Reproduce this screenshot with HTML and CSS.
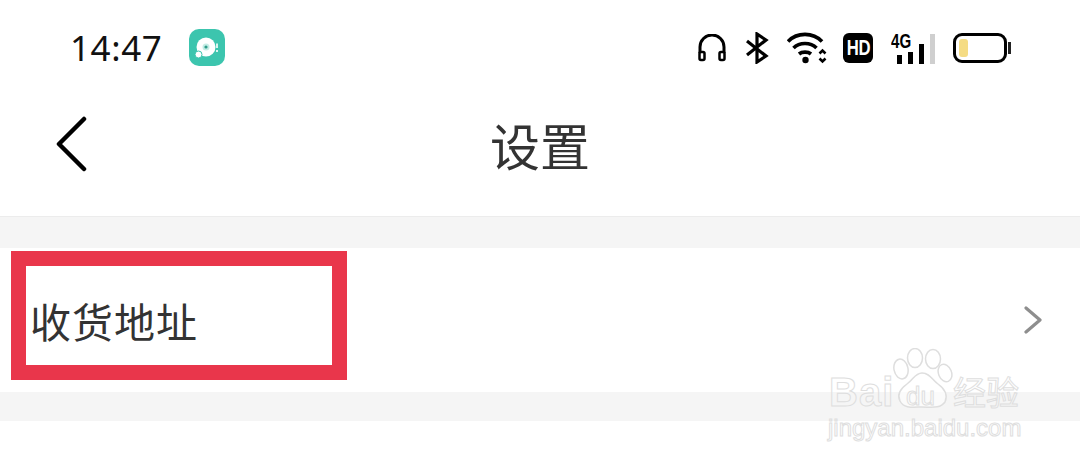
FILE: index.html
```html
<!DOCTYPE html>
<html>
<head>
    <title>设置</title>
    <meta name="viewport" content="width=device-width, initial-scale=1.0">
    <link rel="stylesheet" href="styles.css">
</head>
<body>
    <div class="status-bar">
        <div class="status-left">
            <span class="time">14:47</span>
            <svg class="app-icon" width="36" height="37" viewBox="0 0 36 37">
                <rect width="36" height="37" rx="10" fill="#3cc5ae"/>
                <circle cx="17" cy="18" r="9.500" fill="#fff"/>
                <circle cx="17" cy="18" r="3.500" fill="#c4ece5"/>
                <circle cx="17" cy="18" r="1.600" fill="#2f9c8a"/>
                <circle cx="9.500" cy="25.500" r="3.500" fill="#fff" stroke="#3cc5ae" stroke-width="1"/>
                <path d="M28 14.500v4.500M28 21v2" stroke="#fff" stroke-width="1.600"/>
            </svg>
        </div>
        <div class="status-right">
            <svg width="30" height="28" viewBox="0 0 30 28" fill="none" stroke="#000">
                <path d="M3 19v-6a12 12 0 0 1 24 0v6" stroke-width="3"/>
                <rect x="2.500" y="18" width="5" height="8" rx="1.500" stroke-width="2.500"/>
                <rect x="22.500" y="18" width="5" height="8" rx="1.500" stroke-width="2.500"/>
            </svg>
            <svg width="24" height="32" viewBox="0 0 24 32" fill="none" stroke="#000" stroke-width="3.200">
                <path d="M2 9l19 15-9 6V2l9 6L2 23"/>
            </svg>
            <svg width="40" height="32" viewBox="0 0 40 32" fill="none" stroke="#000" stroke-width="3.600">
                <path d="M1 9.500c9-9.500 25-9.500 34 0M6.500 16c6-6 17-6 23 0M12 22c3-2.500 9-2.500 12 0"/>
                <circle cx="18.500" cy="28" r="3.200" fill="#000" stroke="none"/>
                <path d="M32.500 21.500l3-3 3 3M32.500 26.500l3 3 3-3" stroke-width="2.600"/>
            </svg>
            <div class="hd"><span class="hd-text">HD</span></div>
            <div class="signal">
                <span class="net">4G</span>
                <div class="bars">
                    <i class="bar bar-1"></i>
                    <i class="bar bar-2"></i>
                    <i class="bar bar-3"></i>
                    <i class="bar bar-4"></i>
                </div>
            </div>
            <div class="battery">
                <div class="battery-body"><div class="battery-level"></div></div>
                <div class="battery-cap"></div>
            </div>
        </div>
    </div>

    <div class="header">
        <svg class="back" width="32" height="56" viewBox="0 0 32 56" fill="none" stroke="#000" stroke-width="4.500" stroke-linecap="round" stroke-linejoin="round">
            <path d="M29 3L4 28l25 25"/>
        </svg>
        <h1>设置</h1>
    </div>

    <div class="gap gap-top"></div>

    <div class="row">
        <span class="row-label">收货地址</span>
        <svg width="18" height="28" viewBox="0 0 18 28" fill="none" stroke="#8e8e8e" stroke-width="3.200" stroke-linecap="round" stroke-linejoin="round">
            <path d="M2 2l14 12L2 26"/>
        </svg>
    </div>

    <div class="gap gap-bottom"></div>

    <div class="highlight"></div>

    <div class="watermark">
        <span class="wm-bai">Bai</span>
        <svg class="wm-paw" width="60" height="62" viewBox="0 0 60 62" fill="rgba(255,255,255,.55)" stroke="#dedede" stroke-width="1.500">
            <ellipse cx="8" cy="21" rx="7" ry="10" transform="rotate(-12 8 21)"/>
            <ellipse cx="22" cy="10" rx="7.500" ry="9.500"/>
            <ellipse cx="40" cy="11" rx="7.500" ry="9.500"/>
            <ellipse cx="52" cy="25" rx="6.500" ry="9" transform="rotate(-22 52 25)"/>
            <path d="M29 25c-7 0-9 7-15 11-7 5-10 11-7 17 4 8 14 6 22 6 9 0 18 2 23-5 3-7 0-13-7-18-6-4-8-11-16-11z"/>
        </svg>
        <span class="wm-du">du</span>
        <span class="wm-jy">经验</span>
        <span class="wm-url">jingyan.baidu.com</span>
    </div>
</body>
</html>
```

FILE: styles.css
```css
body {
    margin: 0;
    background-color: #ffffff;
    font-family: "Noto Sans CJK SC", "Noto Sans", sans-serif;
    height: 463px;
    overflow: hidden;
    position: relative;
}

.status-bar {
    height: 96px;
    display: flex;
    justify-content: space-between;
    align-items: center;
    padding: 0 69px 0 70px;
}

.status-left {
    display: flex;
    align-items: center;
    gap: 27px;
}

.time {
    font-family: "Noto Sans", sans-serif;
    font-size: 35px;
    letter-spacing: 0.6px;
    color: #111;
    position: relative;
    top: -1px;
}

.app-icon {
    position: relative;
    top: -1px;
}

.status-right {
    display: flex;
    align-items: center;
    gap: 18px;
}

.hd {
    background-color: #000;
    color: #fff;
    width: 30px;
    height: 30px;
    margin-left: -2px;
    border-radius: 6px;
    font-family: "Liberation Sans", sans-serif;
    font-weight: bold;
    font-size: 22px;
    display: flex;
    align-items: center;
    justify-content: center;
}

.hd-text {
    transform: scaleX(.76);
    letter-spacing: -0.5px;
}

.signal {
    position: relative;
    width: 44px;
    height: 31px;
}

.net {
    position: absolute;
    left: 0;
    top: 0;
    font-family: "Liberation Sans", sans-serif;
    font-weight: bold;
    font-size: 21px;
    line-height: 16px;
    transform: scaleX(.72);
    transform-origin: left;
}

.bars {
    position: absolute;
    right: 0;
    bottom: 0;
    display: flex;
    align-items: flex-end;
    gap: 6px;
}

.bar {
    width: 5px;
    background-color: #000;
    display: block;
}

.bar-1 { height: 9px; }
.bar-2 { height: 12px; }
.bar-3 { height: 20px; }
.bar-4 { height: 30px; background-color: #cfcfcf; }

.battery {
    display: flex;
    align-items: center;
    gap: 1px;
}

.battery-body {
    width: 45px;
    height: 18px;
    border: 3px solid #000;
    border-radius: 9px;
    padding: 3px 0 3px 3px;
}

.battery-level {
    width: 9px;
    height: 100%;
    background-color: #f5dc84;
    border-radius: 3px;
}

.battery-cap {
    width: 3px;
    height: 12px;
    background-color: #222;
}

.header {
    height: 121px;
    display: flex;
    align-items: center;
    justify-content: center;
    position: relative;
    padding-bottom: 25px;
    border-bottom: 1px solid #ececec;
    box-sizing: border-box;
}

.header h1 {
    margin: 0;
    font-size: 50px;
    font-weight: 400;
    color: #333;
    line-height: 1;
}

.back {
    position: absolute;
    left: 55px;
    top: 20px;
}

.gap {
    background-color: #f5f5f5;
}

.gap-top { height: 31px; }
.gap-bottom { height: 29px; }

.row {
    height: 144px;
    display: flex;
    justify-content: space-between;
    align-items: center;
    padding: 0 38px 0 30px;
}

.row-label {
    font-size: 41px;
    color: #333;
    letter-spacing: 1px;
}

.highlight {
    position: absolute;
    left: 11px;
    top: 251px;
    width: 306px;
    height: 99px;
    border: 15px solid #e9364b;
}

.watermark {
    position: absolute;
    left: 0;
    top: 0;
    color: transparent;
    -webkit-text-stroke: 1px #dedede;
    font-family: "Liberation Sans", sans-serif;
}

.wm-bai {
    position: absolute;
    left: 829px;
    top: 370px;
    font-size: 40px;
    font-weight: bold;
    line-height: 44px;
    letter-spacing: 1px;
}

.wm-paw {
    position: absolute;
    left: 893px;
    top: 348px;
}

.wm-du {
    position: absolute;
    left: 906px;
    top: 381px;
    font-size: 26px;
    line-height: 30px;
}

.wm-jy {
    position: absolute;
    left: 953px;
    top: 371px;
    font-family: "Noto Sans CJK SC", sans-serif;
    font-size: 33px;
    line-height: 40px;
    white-space: nowrap;
}

.wm-url {
    position: absolute;
    left: 828px;
    top: 414px;
    font-size: 24px;
    line-height: 28px;
    white-space: nowrap;
}
```
